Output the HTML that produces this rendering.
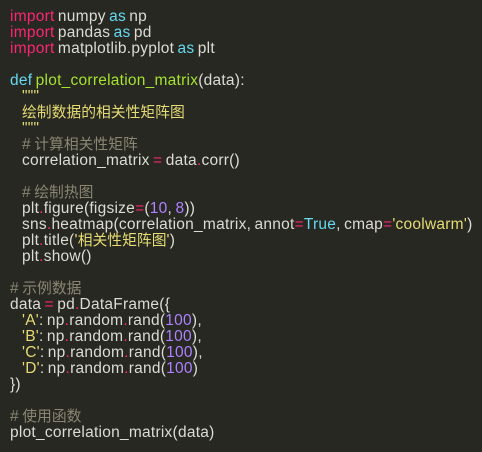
<!DOCTYPE html>
<html><head><meta charset="utf-8"><style>
html,body{margin:0;padding:0;background:#272822;width:482px;height:452px;overflow:hidden}
pre{margin:0;padding:9px 0 0 10px;font-family:"Liberation Sans","Noto Sans CJK SC",sans-serif;font-size:15.5px;letter-spacing:0.25px;word-spacing:-1.2px;line-height:16px;color:#dcdcd4;white-space:pre}
.k{color:#f92672}.b{color:#66d9ef}.g{color:#a6e22e}.s{color:#e6db74}.c{color:#8a8672}.n{color:#ae81ff}
.z{font-size:14.8px;letter-spacing:0}
.i{display:inline-block;width:12px}
</style></head><body><pre><span class="k">import</span> numpy <span class="b">as</span> np
<span class="k">import</span> pandas <span class="b">as</span> pd
<span class="k">import</span> matplotlib.pyplot <span class="b">as</span> plt

<span class="b">def</span> <span class="g">plot_correlation_matrix</span>(data):
<span class="i"></span><span class="s">"""</span>
<span class="i"></span><span class="s"><span class="z">绘制数据的相关性矩阵图</span></span>
<span class="i"></span><span class="s">"""</span>
<span class="i"></span><span class="c"># <span class="z">计算相关性矩阵</span></span>
<span class="i"></span>correlation_matrix <span class="k">=</span> data<span class="k">.</span>corr()

<span class="i"></span><span class="c"># <span class="z">绘制热图</span></span>
<span class="i"></span>plt<span class="k">.</span>figure(figsize<span class="k">=</span>(<span class="n">10</span>, <span class="n">8</span>))
<span class="i"></span>sns<span class="k">.</span>heatmap(correlation_matrix, annot<span class="k">=</span><span class="b">True</span>, cmap<span class="k">=</span><span class="s">'coolwarm'</span>)
<span class="i"></span>plt<span class="k">.</span>title(<span class="s">'<span class="z">相关性矩阵图</span>'</span>)
<span class="i"></span>plt<span class="k">.</span>show()

<span class="c"># <span class="z">示例数据</span></span>
data <span class="k">=</span> pd<span class="k">.</span>DataFrame({
<span class="i"></span><span class="s">'A'</span>: np<span class="k">.</span>random<span class="k">.</span>rand(<span class="n">100</span>),
<span class="i"></span><span class="s">'B'</span>: np<span class="k">.</span>random<span class="k">.</span>rand(<span class="n">100</span>),
<span class="i"></span><span class="s">'C'</span>: np<span class="k">.</span>random<span class="k">.</span>rand(<span class="n">100</span>),
<span class="i"></span><span class="s">'D'</span>: np<span class="k">.</span>random<span class="k">.</span>rand(<span class="n">100</span>)
})

<span class="c"># <span class="z">使用函数</span></span>
plot_correlation_matrix(data)</pre></body></html>
